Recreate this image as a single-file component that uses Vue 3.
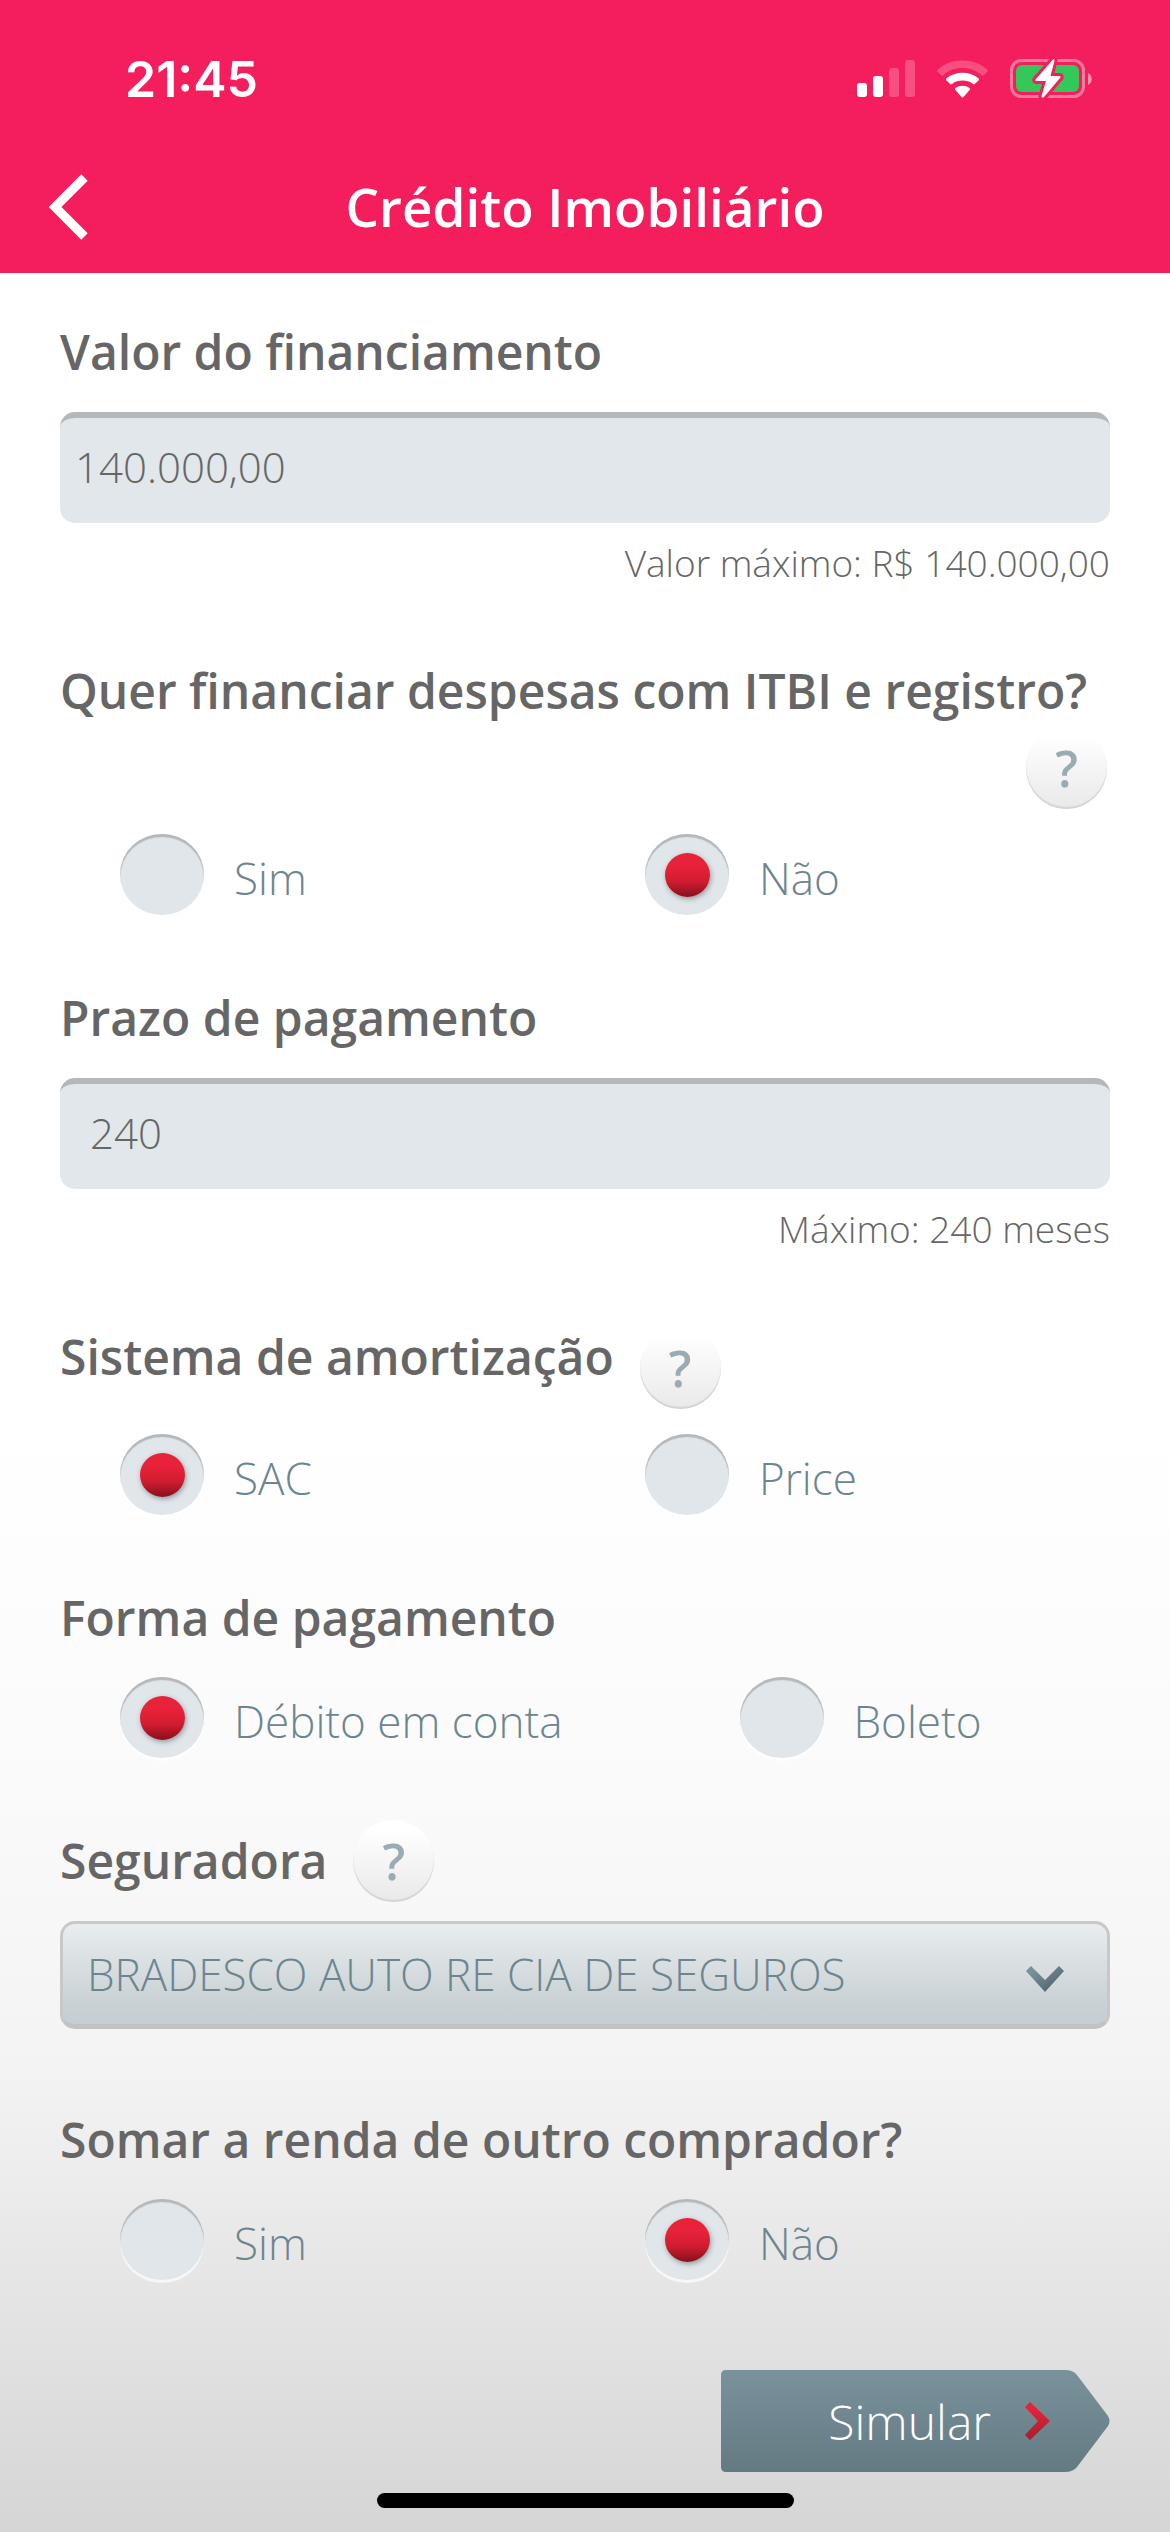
<script setup>
import { reactive } from 'vue'

const form = reactive({
  valor: '140.000,00',
  despesas: 'nao',
  prazo: '240',
  sistema: 'sac',
  pagamento: 'debito',
  seguradora: 'bradesco',
  renda: 'nao',
})
</script>

<template>
  <div class="screen">
    <header class="header">
      <div class="status">
        <span class="clock">21:45</span>
        <div class="status-icons">
          <svg width="58" height="37" viewBox="0 0 58 37" fill="#fff" aria-hidden="true">
            <rect x="0" y="23" width="10" height="14" rx="3" />
            <rect x="16" y="16" width="10" height="21" rx="3" />
            <rect x="32" y="8" width="10" height="29" rx="3" opacity=".22" />
            <rect x="48" y="0" width="10" height="37" rx="3" opacity=".22" />
          </svg>
          <svg width="51" height="38" viewBox="0 0 51 38" fill="#fff" aria-hidden="true">
            <path opacity=".22" d="M.8 9.6C7.500 3.400 16 .5 25.500 .5S43.500 3.400 50.200 9.600c.8.8.8 1.500.1 2.200l-3.500 3.400c-.7.7-1.400.7-2.100 0-5.300-4.700-12-7.200-19.200-7.200S11.600 10.500 6.300 15.200c-.7.7-1.400.7-2.100 0L.7 11.800c-.7-.7-.7-1.400.1-2.200z" />
            <path d="M9.600 18.300C14 14.700 19.500 12.800 25.500 12.800s11.500 1.900 15.900 5.500c.8.7.8 1.500.1 2.200l-3.400 3.300c-.7.700-1.400.700-2.200.1-3-2.200-6.500-3.300-10.400-3.300s-7.400 1.100-10.400 3.300c-.8.600-1.500.600-2.200-.1L9.500 20.500c-.7-.7-.7-1.500.1-2.200z" />
            <path d="M18.600 28c1.900-1.500 4.200-2.300 6.900-2.300s5 .8 6.900 2.300c.8.700.8 1.400.1 2.100l-6 6.800c-.7.700-1.300.700-2 0l-6-6.800c-.7-.7-.7-1.400.1-2.100z" />
          </svg>
          <svg width="83" height="41" viewBox="0 0 83 41" aria-hidden="true">
            <rect x="1.500" y="2.500" width="72" height="36" rx="10" fill="none" stroke="#fff" stroke-opacity=".4" stroke-width="3" />
            <path d="M78 15c5 2 5 10 0 12z" fill="#fff" fill-opacity=".5" />
            <rect x="6" y="7" width="63" height="27" rx="6" fill="#34c759" />
            <path d="M43 1.500 25.500 21.500q-.8 1.500 1 1.500H36L31.500 38q0 3 2.500 1L50.500 19.500q.8-1.500-1-1.500H40.500L44.500 3q0-3-1.500-1.500z" fill="#fff" stroke="#f51e5d" stroke-width="6" stroke-linejoin="round" paint-order="stroke" />
          </svg>
        </div>
      </div>
      <div class="titlebar">
        <button type="button" class="back" aria-label="Voltar">
          <svg width="39" height="66" viewBox="0 0 39 66" aria-hidden="true">
            <path d="M35.500 3.500 6 33 35.500 62.500" fill="none" stroke="#fff" stroke-width="9" />
          </svg>
        </button>
        <h1 class="title">Crédito Imobiliário</h1>
      </div>
    </header>

    <form class="form" @submit.prevent>
      <section class="block">
        <div class="head"><label class="heading" for="valor">Valor do financiamento</label></div>
        <input id="valor" v-model="form.valor" class="field" type="text" />
        <p class="hint">Valor máximo: R$ 140.000,00</p>
      </section>

      <section class="block" role="radiogroup" aria-labelledby="h-despesas">
        <div class="head">
          <h2 id="h-despesas" class="heading">Quer financiar despesas com ITBI e registro?</h2>
          <button type="button" class="help help-end">?</button>
        </div>
        <div class="options after-help">
          <label class="option"><input v-model="form.despesas" type="radio" name="despesas" value="sim" /><span>Sim</span></label>
          <label class="option"><input v-model="form.despesas" type="radio" name="despesas" value="nao" /><span>Não</span></label>
        </div>
      </section>

      <section class="block">
        <div class="head"><label class="heading" for="prazo">Prazo de pagamento</label></div>
        <input id="prazo" v-model="form.prazo" class="field field-inset" type="text" />
        <p class="hint">Máximo: 240 meses</p>
      </section>

      <section class="block" role="radiogroup" aria-labelledby="h-sistema">
        <div class="head">
          <h2 id="h-sistema" class="heading">Sistema de amortização</h2>
          <button type="button" class="help">?</button>
        </div>
        <div class="options after-help">
          <label class="option"><input v-model="form.sistema" type="radio" name="sistema" value="sac" /><span>SAC</span></label>
          <label class="option"><input v-model="form.sistema" type="radio" name="sistema" value="price" /><span>Price</span></label>
        </div>
      </section>

      <section class="block" role="radiogroup" aria-labelledby="h-pagamento">
        <div class="head"><h2 id="h-pagamento" class="heading">Forma de pagamento</h2></div>
        <div class="options options-wide">
          <label class="option"><input v-model="form.pagamento" type="radio" name="pagamento" value="debito" /><span>Débito em conta</span></label>
          <label class="option"><input v-model="form.pagamento" type="radio" name="pagamento" value="boleto" /><span>Boleto</span></label>
        </div>
      </section>

      <section class="block block-select">
        <div class="head head-center">
          <label class="heading" for="seguradora">Seguradora</label>
          <button type="button" class="help">?</button>
        </div>
        <div class="select-wrap">
          <select id="seguradora" v-model="form.seguradora" class="select">
            <option value="bradesco">BRADESCO AUTO RE CIA DE SEGUROS</option>
          </select>
          <svg class="caret" width="38" height="28" viewBox="0 0 38 28" aria-hidden="true">
            <defs>
              <linearGradient id="caret-fill" x1="0" y1="0" x2="1" y2="1">
                <stop offset=".2" stop-color="#78909a" />
                <stop offset=".8" stop-color="#54676f" />
              </linearGradient>
            </defs>
            <path d="M5 1 19 15 33 1l5 5-19 21L0 6z" fill="url(#caret-fill)" />
          </svg>
        </div>
      </section>

      <section class="block" role="radiogroup" aria-labelledby="h-renda">
        <div class="head"><h2 id="h-renda" class="heading">Somar a renda de outro comprador?</h2></div>
        <div class="options">
          <label class="option"><input v-model="form.renda" type="radio" name="renda" value="sim" /><span>Sim</span></label>
          <label class="option"><input v-model="form.renda" type="radio" name="renda" value="nao" /><span>Não</span></label>
        </div>
      </section>

      <button type="submit" class="submit">
        <span>Simular</span>
        <svg width="25" height="38" viewBox="0 0 25 38" aria-hidden="true">
          <defs>
            <linearGradient id="go-fill" x1="0" y1="0" x2="0" y2="1">
              <stop offset=".2" stop-color="#e22438" />
              <stop offset="1" stop-color="#a61e2c" />
            </linearGradient>
          </defs>
          <path d="M5 0 25 19 5 38 0 33 13 19 0 5z" fill="url(#go-fill)" />
        </svg>
      </button>
    </form>

    <div class="home-bar"></div>
  </div>
</template>

<style>
body {
  margin: 0;
}
</style>

<style scoped>
.screen {
  box-sizing: border-box;
  display: flex;
  flex-direction: column;
  min-height: 100vh;
  padding-bottom: 24px;
  font-family: "Open Sans", "Noto Sans", sans-serif;
  font-weight: 300;
  color: #666;
  background: linear-gradient(#fff 0%, #fff 56%, #fafafa 71%, #f3f3f3 82%, #e4e4e4 91%, #d5d5d5 100%);
}

.header {
  padding-top: 16px;
  color: #fff;
  background: #f51e5d;
}

.status {
  display: flex;
  align-items: center;
  justify-content: space-between;
  height: 125px;
  padding: 0 77px 0 125px;
}

.clock {
  font-family: Inter, sans-serif;
  font-size: 50px;
  font-weight: 600;
}

.status-icons {
  display: flex;
  align-items: center;
  gap: 22px;
}

.titlebar {
  display: grid;
  grid-template-columns: 140px 1fr 140px;
  align-items: center;
  height: 132px;
}

.back {
  display: flex;
  width: 140px;
  padding: 0 0 0 49px;
  border: 0;
  background: none;
}

.title {
  margin: 0;
  font-size: 53px;
  font-weight: 600;
  line-height: 60px;
  text-align: center;
}

.form {
  display: flex;
  flex-direction: column;
  gap: 73px;
  padding: 49px 60px 0;
}

.block {
  display: flex;
  flex-direction: column;
}

.block-select {
  margin: -11px 0 8px;
}

.head {
  display: flex;
  flex-wrap: wrap;
  align-items: flex-start;
  row-gap: 6px;
}

.head-center {
  align-items: center;
}

.heading {
  margin: 0;
  font-size: 48px;
  font-weight: 600;
  line-height: 60px;
}

.help {
  width: 81px;
  height: 82px;
  margin: 0 3px 0 26px;
  padding: 0;
  border: 0;
  border-radius: 50%;
  font: 600 50px/80px "Open Sans", "Noto Sans", sans-serif;
  color: #9aabb3;
  background: linear-gradient(#fff 10%, #e9e9e9 100%);
  box-shadow: inset 0 -2px 1px #d4d4d4;
}

.help-end {
  margin-left: auto;
}

.field {
  box-sizing: border-box;
  width: 100%;
  height: 111px;
  margin-top: 30px;
  padding: 0 15px 8px;
  border: 0;
  border-top: 6px solid #b4b8ba;
  border-radius: 15px;
  font: inherit;
  font-size: 42px;
  color: #666;
  background: #e1e7ea;
}

.field-inset {
  padding: 0 30px 8px;
}

.hint {
  margin: 15px 0 0;
  font-size: 37px;
  line-height: 50px;
  text-align: right;
}

.options {
  display: grid;
  grid-template-columns: 1fr 1fr;
  margin-top: 29px;
}

.options-wide {
  grid-template-columns: 59fr 41fr;
}

.after-help {
  margin-top: 25px;
}

.option {
  display: flex;
  align-items: center;
  gap: 30px;
  height: 81px;
  padding-left: 60px;
  font-size: 44px;
  line-height: 60px;
  color: #6d858f;
}

.option span {
  padding-top: 6px;
}

.option input {
  display: grid;
  flex: none;
  place-items: center;
  width: 84px;
  height: 81px;
  margin: 0;
  border-radius: 50%;
  appearance: none;
  background: #e0e6e9;
  box-shadow: inset 0 3px 1px #b5b8ba, 0 3px 1px rgba(255, 255, 255, 0.7);
}

.option input:checked::before {
  content: "";
  width: 45px;
  height: 44px;
  border-radius: 50%;
  background: linear-gradient(#e82238 30%, #d01c30 65%, #86101c 100%);
  box-shadow: 1px 2px 5px rgba(70, 80, 85, 0.5);
}

.select-wrap {
  position: relative;
  margin-top: 19px;
}

.select {
  display: block;
  box-sizing: border-box;
  width: 100%;
  height: 108px;
  padding: 0 100px 0 24px;
  border: 3px solid #c8c8c8;
  border-bottom: 5px solid #c2c2c2;
  border-radius: 15px;
  appearance: none;
  font: inherit;
  font-size: 44px;
  color: #6d858f;
  background: linear-gradient(#e9edef, #c9d1d4 80%, #c5ced6);
}

.caret {
  position: absolute;
  top: 44px;
  right: 46px;
  pointer-events: none;
}

.submit {
  display: flex;
  align-items: center;
  align-self: flex-end;
  justify-content: flex-end;
  gap: 34px;
  width: 389px;
  height: 102px;
  margin-top: 17px;
  padding: 0 60px 0 0;
  border: 0;
  font: inherit;
  font-size: 48px;
  color: #fff;
  background: linear-gradient(#7a929b, #637a83);
  clip-path: path("M5 0H344Q352 0 356 5L387 46Q390 51 387 56L356 97Q352 102 344 102H5Q0 102 0 97V5Q0 0 5 0Z");
}

.home-bar {
  align-self: center;
  width: 417px;
  height: 15px;
  margin-top: 21px;
  border-radius: 8px;
  background: #000;
}
</style>
